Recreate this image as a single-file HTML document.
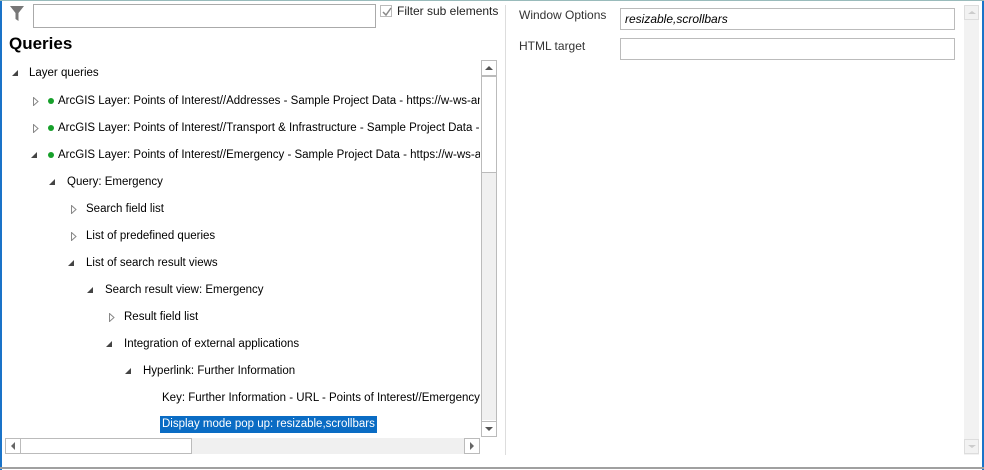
<!DOCTYPE html>
<html><head><meta charset="utf-8"><style>
*{margin:0;padding:0;box-sizing:border-box}
body{width:984px;height:470px;background:#fff;font-family:"Liberation Sans",sans-serif;font-size:12px;color:#000;position:relative;overflow:hidden}
.a{position:absolute}
.row{position:absolute;height:18px;line-height:18px;white-space:nowrap;font-size:11.5px}
.tri{position:absolute;width:0;height:0}
.open{border-left:6px solid transparent;border-bottom:6px solid #444}
.dot{position:absolute;width:6px;height:6px;border-radius:3px;background:#16a02a}
</style></head><body>
<div class="a" style="left:0;top:0;width:2px;height:470px;background:#1a73c8"></div>
<div class="a" style="left:982px;top:0;width:2px;height:470px;background:#1a73c8"></div>
<div class="a" style="left:0;top:0;width:984px;height:1px;background:#9bb"></div>
<div class="a" style="left:0;top:467px;width:984px;height:2px;background:#a0a0a0"></div>
<div class="a" style="left:505px;top:5px;width:1px;height:450px;background:#ddd"></div>

<svg class="a" style="left:9px;top:5px" width="16" height="18" viewBox="0 0 16 18"><path d="M1 1h14L9.5 8v8L6.5 14V8z" fill="#777"/></svg>
<div class="a" style="left:33px;top:4px;width:343px;height:24px;border:1px solid #aaa"></div>
<div class="a" style="left:380px;top:5px;width:12px;height:12px;border:1px solid #bbb"></div>
<svg class="a" style="left:381px;top:6px" width="11" height="11"><path d="M2 6l3 3 5-7" stroke="#888" stroke-width="1.5" fill="none"/></svg>
<div class="a" style="left:397px;top:4px;font-size:12px;color:#222">Filter sub elements</div>
<div class="a" style="left:9px;top:34px;font-size:17px;font-weight:bold">Queries</div>

<svg width="0" height="0" style="position:absolute"><defs><symbol id="c" viewBox="0 0 6 9"><path d="M0.5 0.5L5 4.5L0.5 8.5Z" fill="#fff" stroke="#888"/></symbol></defs></svg>

<div class="tri open a" style="left:12px;top:70px"></div>
<div class="row" style="left:29px;top:64px">Layer queries</div>
<svg class="a" style="left:33px;top:97px" width="6" height="9"><use href="#c"/></svg><div class="dot" style="left:48px;top:98px"></div>
<div class="row" style="left:58px;top:92px;width:422px;overflow:hidden">ArcGIS Layer: Points of Interest//Addresses - Sample Project Data - https://w-ws-ang</div>
<svg class="a" style="left:33px;top:124px" width="6" height="9"><use href="#c"/></svg><div class="dot" style="left:48px;top:125px"></div>
<div class="row" style="left:58px;top:119px;width:422px;overflow:hidden">ArcGIS Layer: Points of Interest//Transport &amp; Infrastructure - Sample Project Data - h</div>
<div class="tri open a" style="left:31px;top:152px"></div><div class="dot" style="left:48px;top:152px"></div>
<div class="row" style="left:58px;top:146px;width:422px;overflow:hidden">ArcGIS Layer: Points of Interest//Emergency - Sample Project Data - https://w-ws-ang</div>
<div class="tri open a" style="left:49px;top:179px"></div>
<div class="row" style="left:67px;top:173px">Query: Emergency</div>
<svg class="a" style="left:71px;top:205px" width="6" height="9"><use href="#c"/></svg>
<div class="row" style="left:86px;top:200px">Search field list</div>
<svg class="a" style="left:71px;top:232px" width="6" height="9"><use href="#c"/></svg>
<div class="row" style="left:86px;top:227px">List of predefined queries</div>
<div class="tri open a" style="left:68px;top:260px"></div>
<div class="row" style="left:86px;top:254px">List of search result views</div>
<div class="tri open a" style="left:87px;top:287px"></div>
<div class="row" style="left:105px;top:281px">Search result view: Emergency</div>
<svg class="a" style="left:109px;top:313px" width="6" height="9"><use href="#c"/></svg>
<div class="row" style="left:124px;top:308px">Result field list</div>
<div class="tri open a" style="left:106px;top:341px"></div>
<div class="row" style="left:124px;top:335px">Integration of external applications</div>
<div class="tri open a" style="left:125px;top:368px"></div>
<div class="row" style="left:143px;top:362px">Hyperlink: Further Information</div>
<div class="row" style="left:162px;top:389px;width:318px;overflow:hidden">Key: Further Information - URL - Points of Interest//Emergency</div>
<div class="row" style="left:160px;top:416px;background:#0a6cc4;color:#fff;padding:0 2px;height:17px;line-height:17px">Display mode pop up: resizable,scrollbars</div>

<div class="a" style="left:481px;top:60px;width:16px;height:377px;background:#fff;border:1px solid #bbb"></div>
<div class="a" style="left:481px;top:60px;width:16px;height:16px;border:1px solid #bbb;background:#fff"></div>
<div class="a" style="left:485px;top:66px;border-left:4px solid transparent;border-right:4px solid transparent;border-bottom:4px solid #555"></div>
<div class="a" style="left:481px;top:76px;width:16px;height:97px;border:1px solid #bbb;background:#fff"></div>
<div class="a" style="left:482px;top:173px;width:14px;height:247px;background:#f0f0f0"></div>
<div class="a" style="left:481px;top:421px;width:16px;height:16px;border:1px solid #bbb;background:#fff"></div>
<div class="a" style="left:485px;top:427px;border-left:4px solid transparent;border-right:4px solid transparent;border-top:4px solid #555"></div>
<div class="a" style="left:5px;top:438px;width:475px;height:16px;background:#f0f0f0"></div>
<div class="a" style="left:5px;top:438px;width:16px;height:16px;border:1px solid #bbb;background:#fff"></div>
<div class="a" style="left:11px;top:442px;border-top:4px solid transparent;border-bottom:4px solid transparent;border-right:4px solid #666"></div>
<div class="a" style="left:20px;top:438px;width:172px;height:16px;border:1px solid #bbb;background:#fff"></div>
<div class="a" style="left:464px;top:438px;width:16px;height:16px;border:1px solid #bbb;background:#fff"></div>
<div class="a" style="left:470px;top:442px;border-top:4px solid transparent;border-bottom:4px solid transparent;border-left:4px solid #666"></div>

<div class="a" style="left:519px;top:8px;color:#333">Window Options</div>
<div class="a" style="left:620px;top:8px;width:335px;height:22px;border:1px solid #bbb;padding:3px 4px;font-style:italic">resizable,scrollbars</div>
<div class="a" style="left:519px;top:39px;color:#333">HTML target</div>
<div class="a" style="left:620px;top:38px;width:335px;height:22px;border:1px solid #bbb"></div>
<div class="a" style="left:964px;top:5px;width:15px;height:450px;background:#f2f2f2"></div>
<div class="a" style="left:964px;top:5px;width:15px;height:15px;border:1px solid #ddd"></div>
<div class="a" style="left:968px;top:11px;border-left:4px solid transparent;border-right:4px solid transparent;border-bottom:3px solid #ccc"></div>
<div class="a" style="left:964px;top:439px;width:15px;height:15px;border:1px solid #ddd"></div>
<div class="a" style="left:968px;top:445px;border-left:4px solid transparent;border-right:4px solid transparent;border-top:3px solid #ccc"></div>
</body></html>
